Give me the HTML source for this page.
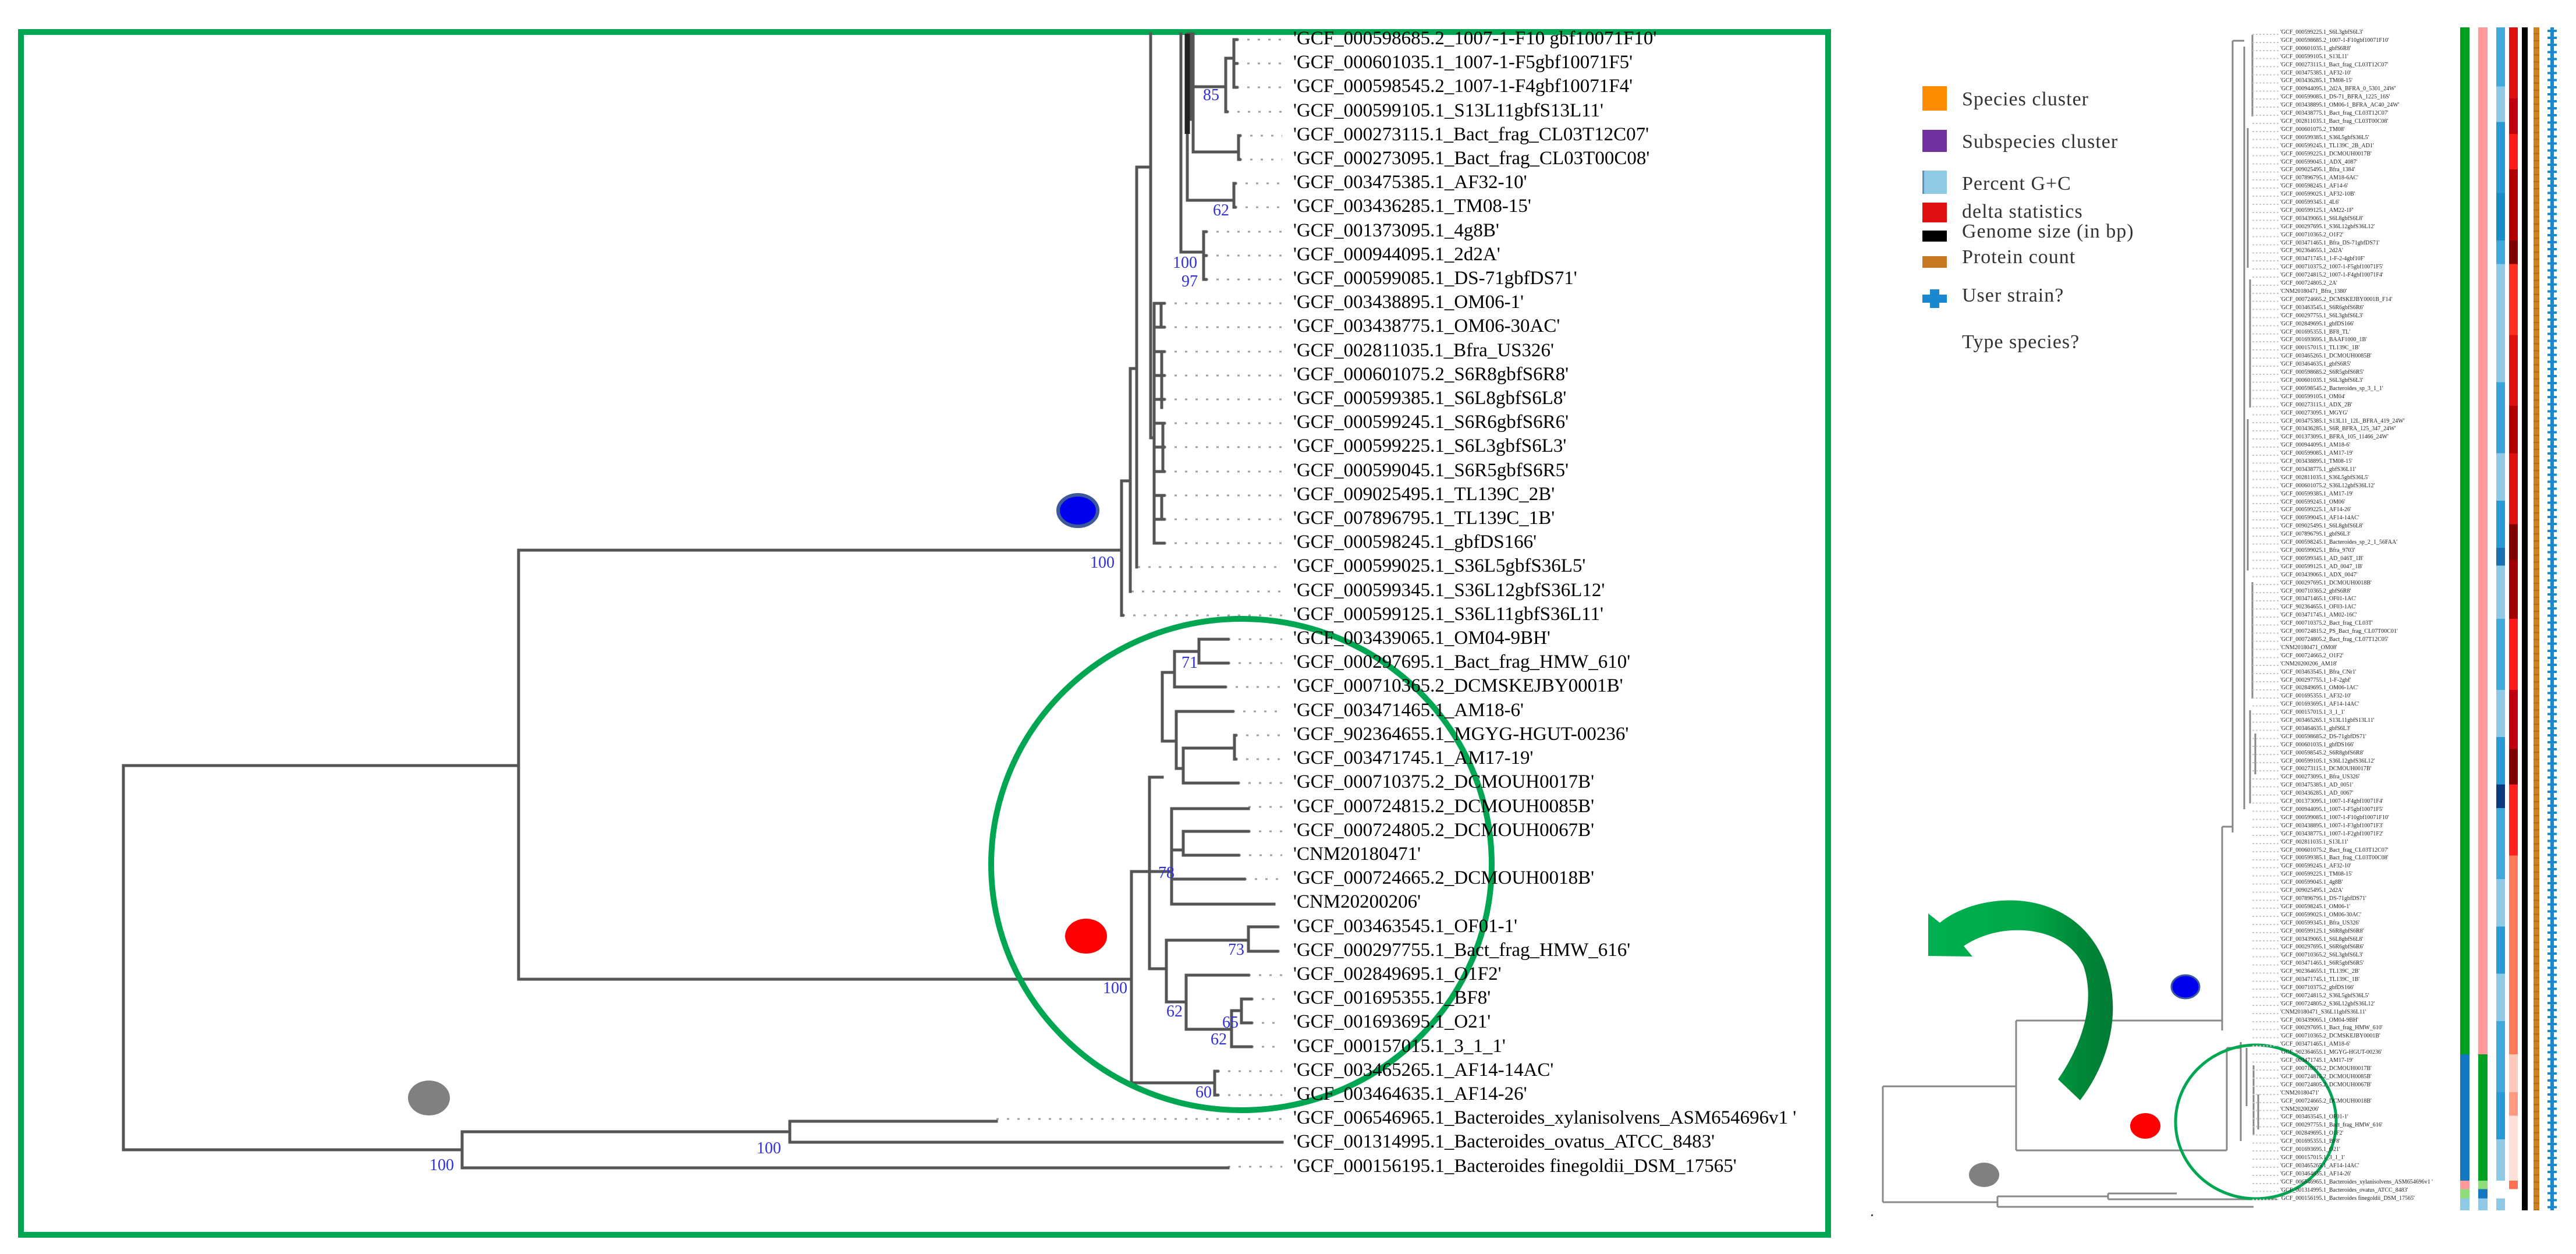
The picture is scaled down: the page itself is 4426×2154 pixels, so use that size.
<!DOCTYPE html>
<html><head><meta charset="utf-8">
<style>
html,body{margin:0;padding:0;background:#fff;}
body{width:4426px;height:2154px;position:relative;overflow:hidden;font-family:"Liberation Serif",serif;}
.abs{position:absolute;}
#labs{position:absolute;left:2222px;top:46px;font-size:33px;line-height:41.2px;white-space:pre;color:#000;}
#rlabs{position:absolute;left:3918px;top:49px;font-size:10px;line-height:13.9px;white-space:pre;color:#222;}
.leg{position:absolute;left:3371px;font-size:34px;color:#333;letter-spacing:1px;white-space:nowrap;}
.sq{position:absolute;left:3303px;width:42px;}
.col{position:absolute;top:47px;height:2032px;}
</style></head><body>

<svg class="abs" style="left:0;top:0" width="4426" height="2154" viewBox="0 0 4426 2154">
<defs>
<linearGradient id="ag" x1="0" y1="0" x2="1" y2="0">
<stop offset="0" stop-color="#00b050"/><stop offset="0.55" stop-color="#00a848"/><stop offset="0.8" stop-color="#008a3a"/><stop offset="1" stop-color="#007a33"/>
</linearGradient>
</defs>
<rect x="36" y="55" width="3105" height="2066" fill="none" stroke="#00a651" stroke-width="10"/>

<g stroke="#a0a0a0" stroke-width="3" stroke-dasharray="4 14" fill="none">
<path d="M2125 68H2203M2125 109H2203M2125 150H2203M2108 192H2203M2130 233H2203M2130 274H2203M2122 315H2203M2122 356H2203M2072 398H2203M2072 439H2203M2072 480H2203M2000 521H2203M2000 562H2203M2000 604H2203M2000 645H2203M2000 686H2203M2000 727H2203M2000 768H2203M2000 810H2203M2000 851H2203M2000 892H2203M2000 933H2203M1955 974H2203M1944 1016H2203M1929 1057H2203M2110 1098H2203M2110 1139H2203M2105 1180H2203M2118 1222H2203M2123 1263H2203M2123 1304H2203M2127 1345H2203M2145 1386H2203M2145 1428H2203M2128 1469H2203M2138 1510H2203M2195 1592H2203M2195 1634H2203M2145 1675H2203M2150 1716H2203M2150 1757H2203M2150 1798H2203M2092 1840H2203M2092 1881H2203M1712 1922H2203M2110 2004H2203"/>
</g>

<g stroke="#555" stroke-width="5" fill="none" stroke-linecap="square">
<path d="M212 1315V1975M212 1315H891M891 945V1682M891 945H1927M891 1682H1944"/>
<path d="M212 1975H794M794 1944V2006M794 1944H1357M1357 1926V1962M1357 1926H1712M1357 1962H2203M794 2006H2110"/>
<path d="M1927 826V1057M1927 826H1942M1927 1057H1929M1942 633V1016M1942 633H1953M1953 287V974M1953 287H1977M1977 58V752M1977 752H1983M1983 521V933"/>
<path d="M1983 521H2000M1983 562H2000M1983 604H2000M1983 645H2000M1983 686H2000M1983 727H2000M1983 768H2000M1983 810H2000M1983 851H2000M1983 892H2000M1983 933H2000M1995 521V562M1996 604V700M1998 727V810M1996 851V892"/>
<path d="M2029 58V433M2029 433H2068M2068 398V480M2068 398H2072M2068 439H2072M2068 480H2072"/>
<path d="M2040 58V344M2040 344H2120M2120 315V356M2120 315H2122M2120 356H2122"/>
<path d="M2050 58V261M2050 261H2128M2128 233V274M2128 233H2130M2128 274H2130"/>
<path d="M2045 58V205M2045 149H2106M2106 100V192M2106 100H2120M2106 192H2108M2120 68V150M2120 68H2125M2120 109H2125M2120 150H2125"/>
</g>
<path d="M2040 58V230" stroke="#222" stroke-width="9"/>
<g stroke="#555" stroke-width="5" fill="none" stroke-linecap="square">
<path d="M1944 1497V1860M1944 1497H1975M1944 1860H2087M2087 1840V1881M2087 1840H2092M2087 1881H2092"/>
<path d="M1975 1335V1664M1975 1335H1997M1997 1155V1273M1997 1155H2018M2018 1119V1180M2018 1119H2060M2018 1180H2105M2060 1098V1139M2060 1098H2110M2060 1139H2110"/>
<path d="M1997 1273H2021M2021 1222V1320M2021 1222H2118M2021 1320H2033M2033 1285V1345M2033 1285H2121M2121 1263V1304M2121 1263H2123M2121 1304H2123M2033 1345H2127"/>
<path d="M1975 1497H2013M2013 1389V1553M2013 1389H2145M2013 1553H2189M2013 1460H2033M2033 1428V1469M2033 1428H2145M2033 1469H2128M2013 1510H2138"/>
<path d="M1975 1664H2004M2004 1615V1721M2004 1615H2145M2145 1592V1634M2145 1592H2195M2145 1634H2195M2004 1721H2038M2038 1675V1768M2038 1675H2145M2038 1768H2116M2116 1736V1798M2116 1736H2133M2133 1716V1757M2133 1716H2150M2133 1757H2150M2116 1798H2150"/>
</g>

<g fill="#3030d8" font-family="Liberation Serif, serif" font-size="28">
<text x="2067" y="172">85</text><text x="2084" y="370">62</text><text x="2015" y="460">100</text><text x="2030" y="492">97</text><text x="1873" y="975">100</text>
<text x="2030" y="1147">71</text><text x="1990" y="1508">78</text><text x="1895" y="1706">100</text><text x="2110" y="1640">73</text><text x="2004" y="1746">62</text><text x="2100" y="1765">65</text><text x="2080" y="1794">62</text><text x="2054" y="1885">60</text><text x="1300" y="1981">100</text><text x="738" y="2010">100</text>
</g>

<ellipse cx="1852" cy="877" rx="34" ry="27" fill="#0000f0" stroke="#3d5a99" stroke-width="6"/>
<ellipse cx="1866" cy="1608" rx="36" ry="30" fill="#ff0000"/>
<ellipse cx="737" cy="1886" rx="36" ry="30" fill="#808080"/>
<ellipse cx="2133" cy="1485" rx="430" ry="422" fill="none" stroke="#00a651" stroke-width="10"/>

<g stroke="#888" stroke-width="3" fill="none">
<path d="M3235 1866V2065M3235 1866H3464M3464 1753V1976M3464 1753H3818M3464 1976H3826"/>
<path d="M3235 2065H3432M3432 2055V2073M3432 2055H3622M3622 2050V2060M3622 2060H3912M3432 2073H3872M3622 2050H3740"/>
<path d="M3818 1420V1770M3818 1420H3836M3836 70V1430M3836 70H3856M3856 80V1390M3826 1800V1976M3826 1800H3850M3850 1790V1960"/>
<path d="M3870 60V200M3862 220V460M3866 480V700M3862 720V980M3870 1000V1200M3866 1220V1380M3875 1260V1330M3860 1800V1900M3872 1830V1950M3880 1880V1940"/>
</g>
<ellipse cx="3755" cy="1695" rx="24" ry="20" fill="#0000f0" stroke="#3d5a99" stroke-width="3"/>
<ellipse cx="3686" cy="1934" rx="26" ry="22" fill="#ff0000"/>
<ellipse cx="3409" cy="2018" rx="26" ry="21" fill="#808080"/>
<ellipse cx="3876" cy="1927" rx="138" ry="132" fill="none" stroke="#00a651" stroke-width="5"/>
<path d="M3313 1569 L3333 1585 C3400 1530 3560 1520 3615 1650 C3650 1740 3620 1830 3574 1890 L3536 1854 C3580 1790 3600 1720 3580 1660 C3550 1590 3440 1580 3374 1625 L3389 1643 L3313 1642 Z" fill="url(#ag)"/>
<rect x="3215" y="2086" width="3" height="3" fill="#444"/>
</svg>

<div class="abs" style="left:3870px;top:52px;width:45px;height:2020px;background:repeating-linear-gradient(180deg,transparent 0,transparent 6px,#c8c8c8 6px,#c8c8c8 8px,transparent 8px,transparent 13.9px);-webkit-mask:repeating-linear-gradient(90deg,#000 0 3px,transparent 3px 6px);mask:repeating-linear-gradient(90deg,#000 0 3px,transparent 3px 6px);"></div>

<div class="sq" style="top:148px;height:42px;background:#ff8c00"></div>
<div class="sq" style="top:223px;height:38px;background:#7030a0"></div>
<div class="sq" style="top:293px;height:40px;background:#8ecae6;border-left:3px solid #5a90b0;width:39px"></div>
<div class="sq" style="top:348px;height:34px;background:#e01010"></div>
<div class="sq" style="top:396px;height:19px;background:#000"></div>
<div class="sq" style="top:440px;height:20px;background:#c87820"></div>
<div class="abs" style="left:3303px;top:506px;width:42px;height:14px;background:#1a88d0"></div>
<div class="abs" style="left:3316px;top:497px;width:16px;height:32px;background:#1a88d0"></div>
<div class="leg" style="top:152px">Species cluster</div>
<div class="leg" style="top:225px">Subspecies cluster</div>
<div class="leg" style="top:297px">Percent G+C</div>
<div class="leg" style="top:345px">delta statistics</div>
<div class="leg" style="top:379px">Genome size (in bp)</div>
<div class="leg" style="top:423px">Protein count</div>
<div class="leg" style="top:489px">User strain?</div>
<div class="leg" style="top:569px">Type species?</div>

<div class="col" style="left:4227px;width:16px;background:linear-gradient(180deg,#00a020 0,#00a020 86.8%,#1278bf 86.8%,#1278bf 97.5%,#ff9a9a 97.5%,#ff9a9a 98.2%,#8fdc7a 98.2%,#8fdc7a 99%,#8ecae6 99%)"></div>
<div class="col" style="left:4258px;width:16px;background:linear-gradient(180deg,#ff9a9a 0,#ff9a9a 86.8%,#00a020 86.8%,#00a020 97.5%,#8fdc7a 97.5%,#8fdc7a 98.2%,#1278bf 98.2%,#1278bf 99%,#8ecae6 99%)"></div>
<div class="col" style="left:4289px;width:15px;background:linear-gradient(180deg,#40a8dc 0,#40a8dc 5%,#8ecae6 5%,#8ecae6 8%,#2a9ad6 8%,#2a9ad6 14%,#1a8cc8 14%,#1a8cc8 18%,#40a8dc 18%,#40a8dc 20%,#8ecae6 20%,#8ecae6 30%,#3aa4da 30%,#3aa4da 36%,#8ecae6 36%,#8ecae6 40%,#2a9ad6 40%,#2a9ad6 44%,#1a70b0 44%,#1a70b0 45.5%,#8ecae6 45.5%,#8ecae6 50%,#40a8dc 50%,#40a8dc 56%,#8ecae6 56%,#8ecae6 60%,#2a9ad6 60%,#2a9ad6 64%,#0a3a80 64%,#0a3a80 66%,#40a8dc 66%,#40a8dc 72%,#8ecae6 72%,#8ecae6 76%,#2a9ad6 76%,#2a9ad6 80%,#8ecae6 80%,#8ecae6 84%,#40a8dc 84%,#40a8dc 90%,#2a9ad6 90%,#2a9ad6 94%,#8ecae6 94%,#8ecae6 97.5%,#fff 97.5%,#fff 99%,#8ecae6 99%)"></div>
<div class="col" style="left:4311px;width:15px;background:linear-gradient(180deg,#e01010 0,#e01010 6%,#c00010 6%,#c00010 9%,#ff1a1a 9%,#ff1a1a 12%,#b00000 12%,#b00000 18%,#800000 18%,#800000 20%,#ff3020 20%,#ff3020 26%,#e01010 26%,#e01010 32%,#b00000 32%,#b00000 36%,#e01010 36%,#e01010 42%,#800000 42%,#800000 45%,#a00000 45%,#a00000 50%,#ff1a1a 50%,#ff1a1a 56%,#c00010 56%,#c00010 61%,#800000 61%,#800000 64%,#ff2020 64%,#ff2020 70%,#ff7a5a 70%,#ff7a5a 86.8%,#ffc8b8 86.8%,#ffc8b8 90%,#ff9a80 90%,#ff9a80 92%,#ffe0d8 92%,#ffe0d8 97.5%,#ff7050 97.5%,#ff7050 98.2%,#fff 98.2%)"></div>
<div class="col" style="left:4333px;width:10px;background:#000"></div>
<div class="col" style="left:4353px;width:10px;background:repeating-linear-gradient(180deg,#d0801c 0,#d0801c 10px,#b86c10 10px,#b86c10 12.1px)"></div>
<div class="col" style="left:4382px;width:6px;background:#1a88d0"></div>
<div class="col" style="left:4377px;width:16px;background:repeating-linear-gradient(180deg,transparent 0,transparent 4px,#1a88d0 4px,#1a88d0 8px,transparent 8px,transparent 12.1px)"></div>

<div id="labs">'GCF_000598685.2_1007-1-F10 gbf10071F10'
'GCF_000601035.1_1007-1-F5gbf10071F5'
'GCF_000598545.2_1007-1-F4gbf10071F4'
'GCF_000599105.1_S13L11gbfS13L11'
'GCF_000273115.1_Bact_frag_CL03T12C07'
'GCF_000273095.1_Bact_frag_CL03T00C08'
'GCF_003475385.1_AF32-10'
'GCF_003436285.1_TM08-15'
'GCF_001373095.1_4g8B'
'GCF_000944095.1_2d2A'
'GCF_000599085.1_DS-71gbfDS71'
'GCF_003438895.1_OM06-1'
'GCF_003438775.1_OM06-30AC'
'GCF_002811035.1_Bfra_US326'
'GCF_000601075.2_S6R8gbfS6R8'
'GCF_000599385.1_S6L8gbfS6L8'
'GCF_000599245.1_S6R6gbfS6R6'
'GCF_000599225.1_S6L3gbfS6L3'
'GCF_000599045.1_S6R5gbfS6R5'
'GCF_009025495.1_TL139C_2B'
'GCF_007896795.1_TL139C_1B'
'GCF_000598245.1_gbfDS166'
'GCF_000599025.1_S36L5gbfS36L5'
'GCF_000599345.1_S36L12gbfS36L12'
'GCF_000599125.1_S36L11gbfS36L11'
'GCF_003439065.1_OM04-9BH'
'GCF_000297695.1_Bact_frag_HMW_610'
'GCF_000710365.2_DCMSKEJBY0001B'
'GCF_003471465.1_AM18-6'
'GCF_902364655.1_MGYG-HGUT-00236'
'GCF_003471745.1_AM17-19'
'GCF_000710375.2_DCMOUH0017B'
'GCF_000724815.2_DCMOUH0085B'
'GCF_000724805.2_DCMOUH0067B'
'CNM20180471'
'GCF_000724665.2_DCMOUH0018B'
'CNM20200206'
'GCF_003463545.1_OF01-1'
'GCF_000297755.1_Bact_frag_HMW_616'
'GCF_002849695.1_O1F2'
'GCF_001695355.1_BF8'
'GCF_001693695.1_O21'
'GCF_000157015.1_3_1_1'
'GCF_003465265.1_AF14-14AC'
'GCF_003464635.1_AF14-26'
'GCF_006546965.1_Bacteroides_xylanisolvens_ASM654696v1 '
'GCF_001314995.1_Bacteroides_ovatus_ATCC_8483'
'GCF_000156195.1_Bacteroides finegoldii_DSM_17565'</div>

<div id="rlabs">'GCF_000599225.1_S6L3gbfS6L3'
'GCF_000598685.2_1007-1-F10gbf10071F10'
'GCF_000601035.1_gbfS6R8'
'GCF_000599105.1_S13L11'
'GCF_000273115.1_Bact_frag_CL03T12C07'
'GCF_003475385.1_AF32-10'
'GCF_003436285.1_TM08-15'
'GCF_000944095.1_2d2A_BFRA_0_5301_24W'
'GCF_000599085.1_DS-71_BFRA_1225_16S'
'GCF_003438895.1_OM06-1_BFRA_AC40_24W'
'GCF_003438775.1_Bact_frag_CL03T12C07'
'GCF_002811035.1_Bact_frag_CL03T00C08'
'GCF_000601075.2_TM08'
'GCF_000599385.1_S36L5gbfS36L5'
'GCF_000599245.1_TL139C_2B_AD1'
'GCF_000599225.1_DCMOUH0017B'
'GCF_000599045.1_ADX_4087'
'GCF_009025495.1_Bfra_1384'
'GCF_007896795.1_AM18-6AC'
'GCF_000598245.1_AF14-6'
'GCF_000599025.1_AF32-10B'
'GCF_000599345.1_4L6'
'GCF_000599125.1_AM22-1F'
'GCF_003439065.1_S6L8gbfS6L8'
'GCF_000297695.1_S36L12gbfS36L12'
'GCF_000710365.2_O1F2'
'GCF_003471465.1_Bfra_DS-71gbfDS71'
'GCF_902364655.1_2d2A'
'GCF_003471745.1_1-F-2-4gbf10F'
'GCF_000710375.2_1007-1-F5gbf10071F5'
'GCF_000724815.2_1007-1-F4gbf10071F4'
'GCF_000724805.2_2A'
'CNM20180471_Bfra_1380'
'GCF_000724665.2_DCMSKEJBY0001B_F14'
'GCF_003463545.1_S6R6gbfS6R6'
'GCF_000297755.1_S6L3gbfS6L3'
'GCF_002849695.1_gbfDS166'
'GCF_001695355.1_BF8_TL'
'GCF_001693695.1_BAAF1000_1B'
'GCF_000157015.1_TL139C_1B'
'GCF_003465265.1_DCMOUH0085B'
'GCF_003464635.1_gbfS6R5'
'GCF_000598685.2_S6R5gbfS6R5'
'GCF_000601035.1_S6L3gbfS6L3'
'GCF_000598545.2_Bacteroides_sp_3_1_1'
'GCF_000599105.1_OM04'
'GCF_000273115.1_ADX_2B'
'GCF_000273095.1_MGYG'
'GCF_003475385.1_S13L11_12L_BFRA_419_24W'
'GCF_003436285.1_S6R_BFRA_125_347_24W'
'GCF_001373095.1_BFRA_105_11466_24W'
'GCF_000944095.1_AM18-6'
'GCF_000599085.1_AM17-19'
'GCF_003438895.1_TM08-15'
'GCF_003438775.1_gbfS36L11'
'GCF_002811035.1_S36L5gbfS36L5'
'GCF_000601075.2_S36L12gbfS36L12'
'GCF_000599385.1_AM17-19'
'GCF_000599245.1_OM06'
'GCF_000599225.1_AF14-26'
'GCF_000599045.1_AF14-14AC'
'GCF_009025495.1_S6L8gbfS6L8'
'GCF_007896795.1_gbfS6L3'
'GCF_000598245.1_Bacteroides_sp_2_1_56FAA'
'GCF_000599025.1_Bfra_9703'
'GCF_000599345.1_AD_046T_1B'
'GCF_000599125.1_AD_0047_1B'
'GCF_003439065.1_ADX_0047'
'GCF_000297695.1_DCMOUH0018B'
'GCF_000710365.2_gbfS6R8'
'GCF_003471465.1_OF01-1AC'
'GCF_902364655.1_OF03-1AC'
'GCF_003471745.1_AM02-16C'
'GCF_000710375.2_Bact_frag_CL03T'
'GCF_000724815.2_PS_Bact_frag_CL07T00C01'
'GCF_000724805.2_Bact_frag_CL07T12C05'
'CNM20180471_OM08'
'GCF_000724665.2_O1F2'
'CNM20200206_AM18'
'GCF_003463545.1_Bfra_CNr1'
'GCF_000297755.1_1-F-2gbf'
'GCF_002849695.1_OM06-1AC'
'GCF_001695355.1_AF32-10'
'GCF_001693695.1_AF14-14AC'
'GCF_000157015.1_3_1_1'
'GCF_003465265.1_S13L11gbfS13L11'
'GCF_003464635.1_gbfS6L3'
'GCF_000598685.2_DS-71gbfDS71'
'GCF_000601035.1_gbfDS166'
'GCF_000598545.2_S6R8gbfS6R8'
'GCF_000599105.1_S36L12gbfS36L12'
'GCF_000273115.1_DCMOUH0017B'
'GCF_000273095.1_Bfra_US326'
'GCF_003475385.1_AD_0051'
'GCF_003436285.1_AD_0067'
'GCF_001373095.1_1007-1-F4gbf10071F4'
'GCF_000944095.1_1007-1-F5gbf10071F5'
'GCF_000599085.1_1007-1-F10gbf10071F10'
'GCF_003438895.1_1007-1-F3gbf10071F3'
'GCF_003438775.1_1007-1-F2gbf10071F2'
'GCF_002811035.1_S13L11'
'GCF_000601075.2_Bact_frag_CL03T12C07'
'GCF_000599385.1_Bact_frag_CL03T00C08'
'GCF_000599245.1_AF32-10'
'GCF_000599225.1_TM08-15'
'GCF_000599045.1_4g8B'
'GCF_009025495.1_2d2A'
'GCF_007896795.1_DS-71gbfDS71'
'GCF_000598245.1_OM06-1'
'GCF_000599025.1_OM06-30AC'
'GCF_000599345.1_Bfra_US326'
'GCF_000599125.1_S6R8gbfS6R8'
'GCF_003439065.1_S6L8gbfS6L8'
'GCF_000297695.1_S6R6gbfS6R6'
'GCF_000710365.2_S6L3gbfS6L3'
'GCF_003471465.1_S6R5gbfS6R5'
'GCF_902364655.1_TL139C_2B'
'GCF_003471745.1_TL139C_1B'
'GCF_000710375.2_gbfDS166'
'GCF_000724815.2_S36L5gbfS36L5'
'GCF_000724805.2_S36L12gbfS36L12'
'CNM20180471_S36L11gbfS36L11'
'GCF_003439065.1_OM04-9BH'
'GCF_000297695.1_Bact_frag_HMW_610'
'GCF_000710365.2_DCMSKEJBY0001B'
'GCF_003471465.1_AM18-6'
'GCF_902364655.1_MGYG-HGUT-00236'
'GCF_003471745.1_AM17-19'
'GCF_000710375.2_DCMOUH0017B'
'GCF_000724815.2_DCMOUH0085B'
'GCF_000724805.2_DCMOUH0067B'
'CNM20180471'
'GCF_000724665.2_DCMOUH0018B'
'CNM20200206'
'GCF_003463545.1_OF01-1'
'GCF_000297755.1_Bact_frag_HMW_616'
'GCF_002849695.1_O1F2'
'GCF_001695355.1_BF8'
'GCF_001693695.1_O21'
'GCF_000157015.1_3_1_1'
'GCF_003465265.1_AF14-14AC'
'GCF_003464635.1_AF14-26'
'GCF_006546965.1_Bacteroides_xylanisolvens_ASM654696v1 '
'GCF_001314995.1_Bacteroides_ovatus_ATCC_8483'
'GCF_000156195.1_Bacteroides finegoldii_DSM_17565'</div>

</body></html>
